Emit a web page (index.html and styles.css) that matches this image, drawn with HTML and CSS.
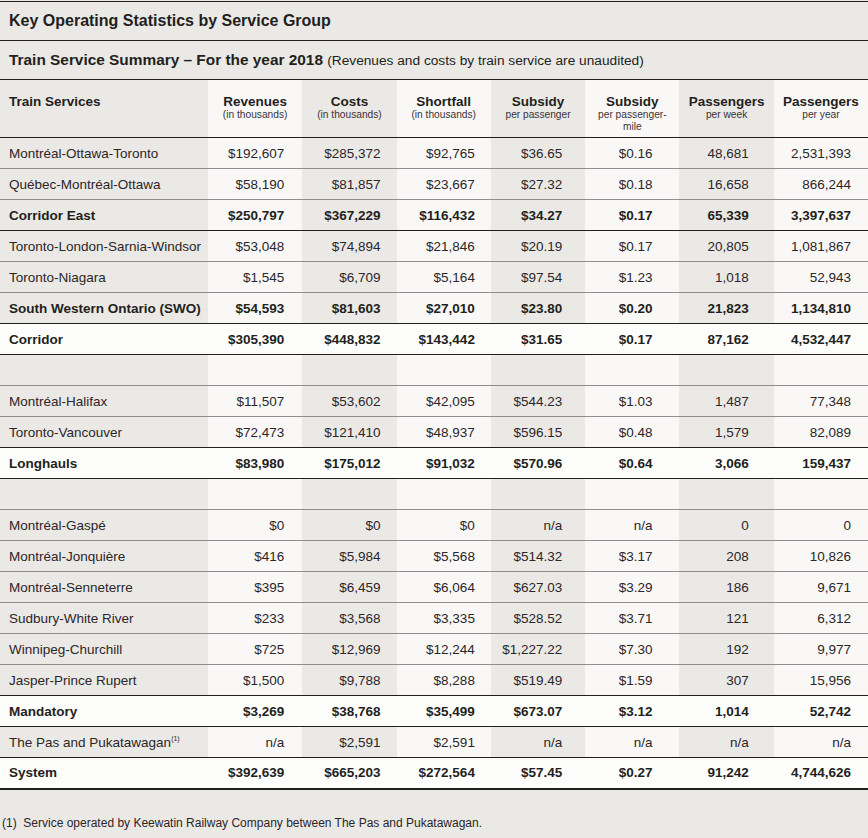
FILE: index.html
```html
<!DOCTYPE html>
<html lang="en">
<head>
  <meta charset="UTF-8" />
  <meta name="viewport" content="width=device-width, initial-scale=1.0">
  <title>Key Operating Statistics by Service Group</title>
  <link rel="stylesheet" href="styles.css">
</head>
<body>

  <div class="report">
    <h1 class="report-title">Key Operating Statistics by Service Group</h1>
    <h2 class="report-sub">Train Service Summary – For the year 2018 <span>(Revenues and costs by train service are unaudited)</span></h2>

    <table class="stats">
      <colgroup>
        <col class="col-name">
        <col class="col-light">
        <col class="col-dark">
        <col class="col-light">
        <col class="col-dark">
        <col class="col-light">
        <col class="col-dark">
        <col class="col-light">
      </colgroup>
      <thead>
        <tr>
          <th class="name">Train Services</th>
          <th>Revenues<small>(in thousands)</small></th>
          <th>Costs<small>(in thousands)</small></th>
          <th>Shortfall<small>(in thousands)</small></th>
          <th>Subsidy<small>per passenger</small></th>
          <th>Subsidy<small>per passenger-<br>mile</small></th>
          <th>Passengers<small>per week</small></th>
          <th>Passengers<small>per year</small></th>
        </tr>
      </thead>
      <tbody>
        <tr><td>Montréal-Ottawa-Toronto</td><td>$192,607</td><td>$285,372</td><td>$92,765</td><td>$36.65</td><td>$0.16</td><td>48,681</td><td>2,531,393</td></tr>
        <tr><td>Québec-Montréal-Ottawa</td><td>$58,190</td><td>$81,857</td><td>$23,667</td><td>$27.32</td><td>$0.18</td><td>16,658</td><td>866,244</td></tr>
        <tr class="sub"><td>Corridor East</td><td>$250,797</td><td>$367,229</td><td>$116,432</td><td>$34.27</td><td>$0.17</td><td>65,339</td><td>3,397,637</td></tr>
        <tr><td>Toronto-London-Sarnia-Windsor</td><td>$53,048</td><td>$74,894</td><td>$21,846</td><td>$20.19</td><td>$0.17</td><td>20,805</td><td>1,081,867</td></tr>
        <tr><td>Toronto-Niagara</td><td>$1,545</td><td>$6,709</td><td>$5,164</td><td>$97.54</td><td>$1.23</td><td>1,018</td><td>52,943</td></tr>
        <tr class="sub"><td>South Western Ontario (SWO)</td><td>$54,593</td><td>$81,603</td><td>$27,010</td><td>$23.80</td><td>$0.20</td><td>21,823</td><td>1,134,810</td></tr>
        <tr class="total"><td>Corridor</td><td>$305,390</td><td>$448,832</td><td>$143,442</td><td>$31.65</td><td>$0.17</td><td>87,162</td><td>4,532,447</td></tr>
        <tr class="gap"><td></td><td></td><td></td><td></td><td></td><td></td><td></td><td></td></tr>
        <tr><td>Montréal-Halifax</td><td>$11,507</td><td>$53,602</td><td>$42,095</td><td>$544.23</td><td>$1.03</td><td>1,487</td><td>77,348</td></tr>
        <tr class="last"><td>Toronto-Vancouver</td><td>$72,473</td><td>$121,410</td><td>$48,937</td><td>$596.15</td><td>$0.48</td><td>1,579</td><td>82,089</td></tr>
        <tr class="total"><td>Longhauls</td><td>$83,980</td><td>$175,012</td><td>$91,032</td><td>$570.96</td><td>$0.64</td><td>3,066</td><td>159,437</td></tr>
        <tr class="gap"><td></td><td></td><td></td><td></td><td></td><td></td><td></td><td></td></tr>
        <tr><td>Montréal-Gaspé</td><td>$0</td><td>$0</td><td>$0</td><td>n/a</td><td>n/a</td><td>0</td><td>0</td></tr>
        <tr><td>Montréal-Jonquière</td><td>$416</td><td>$5,984</td><td>$5,568</td><td>$514.32</td><td>$3.17</td><td>208</td><td>10,826</td></tr>
        <tr><td>Montréal-Senneterre</td><td>$395</td><td>$6,459</td><td>$6,064</td><td>$627.03</td><td>$3.29</td><td>186</td><td>9,671</td></tr>
        <tr><td>Sudbury-White River</td><td>$233</td><td>$3,568</td><td>$3,335</td><td>$528.52</td><td>$3.71</td><td>121</td><td>6,312</td></tr>
        <tr><td>Winnipeg-Churchill</td><td>$725</td><td>$12,969</td><td>$12,244</td><td>$1,227.22</td><td>$7.30</td><td>192</td><td>9,977</td></tr>
        <tr class="last"><td>Jasper-Prince Rupert</td><td>$1,500</td><td>$9,788</td><td>$8,288</td><td>$519.49</td><td>$1.59</td><td>307</td><td>15,956</td></tr>
        <tr class="total"><td>Mandatory</td><td>$3,269</td><td>$38,768</td><td>$35,499</td><td>$673.07</td><td>$3.12</td><td>1,014</td><td>52,742</td></tr>
        <tr class="last"><td>The Pas and Pukatawagan<sup>(1)</sup></td><td>n/a</td><td>$2,591</td><td>$2,591</td><td>n/a</td><td>n/a</td><td>n/a</td><td>n/a</td></tr>
        <tr class="total end"><td>System</td><td>$392,639</td><td>$665,203</td><td>$272,564</td><td>$57.45</td><td>$0.27</td><td>91,242</td><td>4,744,626</td></tr>
      </tbody>
    </table>

    <p class="footnote">(1)&nbsp;&nbsp;Service operated by Keewatin Railway Company between The Pas and Pukatawagan.</p>
  </div>

</body>
</html>
```

FILE: styles.css
```css
html, body {
  margin: 0;
  padding: 0;
}
*, *::before, *::after {
  box-sizing: border-box;
}
body {
  font-family: 'Liberation Sans', Arial, sans-serif;
  background: #ebe9e5;
  color: #2b2629;
  width: 868px;
  min-height: 838px;
}

.report {
  padding-top: 1px;
}

.report-title {
  margin: 0;
  height: 40px;
  line-height: 38px;
  padding: 0 9px;
  font-size: 16px;
  font-weight: bold;
  color: #231f20;
  border-top: 1px solid #231f20;
  border-bottom: 1px solid #231f20;
}

.report-sub {
  margin: 0;
  height: 38px;
  line-height: 38px;
  padding: 0 9px;
  font-size: 15.4px;
  font-weight: bold;
  color: #231f20;
}

.report-sub span {
  font-size: 13.7px;
  font-weight: normal;
}

.stats {
  width: 868px;
  border-collapse: collapse;
  table-layout: fixed;
}

.col-name { width: 208px; background: #ebe9e5; }
.col-light { width: 94.3px; background: #f9f8f6; }
.col-dark { width: 94.3px; background: #ebe9e5; }

.stats th {
  height: 58px;
  padding: 14px 2px 0;
  vertical-align: top;
  text-align: center;
  font-size: 13.5px;
  line-height: 15px;
  font-weight: bold;
  color: #231f20;
  border-top: 1px solid #231f20;
  border-bottom: 1px solid #231f20;
}

.stats th.name {
  text-align: left;
  padding-left: 9px;
}

.stats th small {
  display: block;
  font-size: 10.2px;
  line-height: 12px;
  font-weight: normal;
  color: #3a3438;
}

.stats td {
  height: 31px;
  padding: 0 16px 0 0;
  font-size: 13.5px;
  text-align: right;
  vertical-align: middle;
  white-space: nowrap;
  border-bottom: 1px solid #8e8d8f;
}

.stats td:nth-child(1) { text-align: left; padding-left: 9px; }
.stats td:nth-child(2) { padding-right: 18px; }
.stats td:nth-child(5) { padding-right: 23px; }
.stats td:nth-child(6) { padding-right: 27px; }
.stats td:nth-child(7) { padding-right: 25px; }
.stats td:nth-child(8) { padding-right: 17px; }

.stats tr.sub td,
.stats tr.total td {
  font-weight: bold;
  color: #231f20;
  border-bottom-color: #231f20;
}

.stats tr.last td {
  border-bottom-color: #231f20;
}

.stats tr.total {
  background: #fdfdfc;
}

.stats tr.end td {
  border-bottom: 2px solid #231f20;
}

.stats sup {
  font-size: 7px;
  vertical-align: 6px;
  line-height: 0;
}

.footnote {
  margin: 26px 0 0 2px;
  font-size: 12px;
  color: #2b2629;
}
```
